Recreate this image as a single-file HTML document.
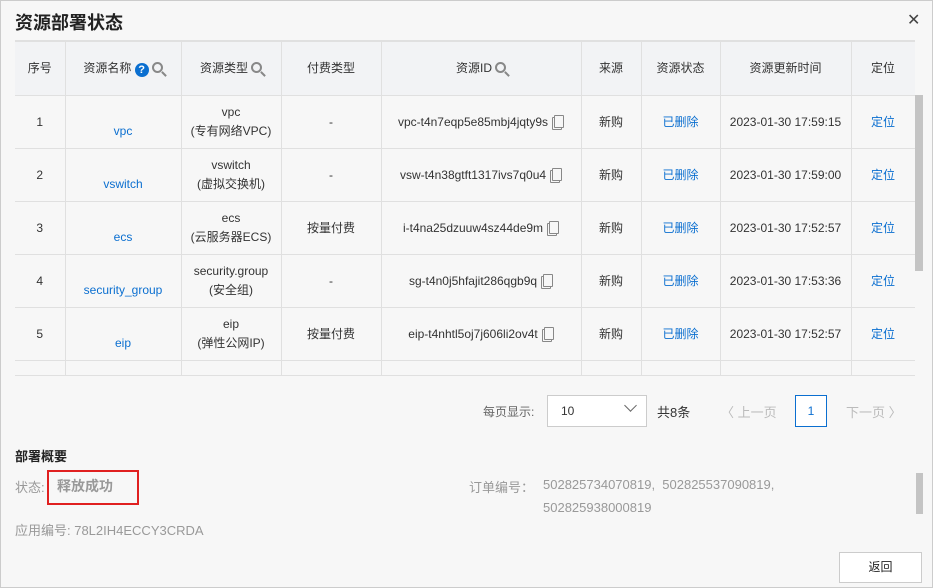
<!DOCTYPE html>
<html><head><meta charset="utf-8"><style>
*{margin:0;padding:0;box-sizing:border-box}
body{width:933px;height:588px;background:#f7f7f7;font-family:"Liberation Sans","Noto Sans CJK SC",sans-serif;font-size:12px;color:#333;position:relative;overflow:hidden;border:1px solid #ccc}
.title{position:absolute;left:14px;top:8px;font-size:18px;font-weight:bold;color:#222}
.close{position:absolute;left:906px;top:9px;font-size:16px;color:#444}
.tw{position:absolute;left:14px;top:39px;width:900px;height:336px;overflow:hidden;border-top:1px solid #e0e0e0;border-bottom:1px solid #e0e0e0}
table{border-collapse:collapse;table-layout:fixed;width:900px}
td,th{border:1px solid #e0e0e0;text-align:center;font-weight:normal;vertical-align:middle;line-height:19px}
th{height:54px;background:#f2f3f5;color:#333;font-size:12px}
td{height:53px;color:#333}
tr td:first-child,tr th:first-child{border-left:none}
a{color:#0b6fd0;text-decoration:none}
.q{display:inline-block;width:14px;height:14px;border-radius:50%;background:#0b6fd0;color:#fff;font-size:11px;line-height:14px;font-weight:bold;vertical-align:-1px}
.s{display:inline-block;width:11px;height:11px;border:2px solid #888;border-radius:50%;position:relative;vertical-align:-1px;margin-left:3px}
.s:after{content:"";position:absolute;width:2px;height:6px;background:#888;left:9px;top:7px;transform:rotate(-45deg)}
.cp{display:inline-block;width:10px;height:13px;border:1px solid #888;border-radius:1px;vertical-align:-2px;margin-left:6px;box-shadow:-2px 2px 0 -1px #f7f7f7,-2px 2px 0 0 #888}
.sb{position:absolute;left:914px;top:94px;width:8px;height:176px;background:#c4c4c4}
.pg{position:absolute;top:395px;color:#999}
.sel{position:absolute;left:546px;top:394px;width:100px;height:32px;border:1px solid #ccc;background:#fff}
</style></head><body>
<div class="title">资源部署状态</div>
<div class="close">✕</div>
<div class="tw"><table>
<colgroup><col style="width:50px"><col style="width:116px"><col style="width:100px"><col style="width:100px"><col style="width:200px"><col style="width:60px"><col style="width:79px"><col style="width:131px"><col style="width:64px"></colgroup>
<tr><th>序号</th><th>资源名称 <span class="q">?</span><span class="s"></span></th><th>资源类型<span class="s"></span></th><th>付费类型</th><th>资源ID<span class="s"></span></th><th>来源</th><th>资源状态</th><th>资源更新时间</th><th>定位</th></tr>
<tr><td>1</td><td><br><a>vpc</a></td><td>vpc<br>(专有网络VPC)</td><td>-</td><td>vpc-t4n7eqp5e85mbj4jqty9s<span class="cp"></span></td><td>新购</td><td><a>已删除</a></td><td>2023-01-30 17:59:15</td><td><a>定位</a></td></tr>
<tr><td>2</td><td><br><a>vswitch</a></td><td>vswitch<br>(虚拟交换机)</td><td>-</td><td>vsw-t4n38gtft1317ivs7q0u4<span class="cp"></span></td><td>新购</td><td><a>已删除</a></td><td>2023-01-30 17:59:00</td><td><a>定位</a></td></tr>
<tr><td>3</td><td><br><a>ecs</a></td><td>ecs<br>(云服务器ECS)</td><td>按量付费</td><td>i-t4na25dzuuw4sz44de9m<span class="cp"></span></td><td>新购</td><td><a>已删除</a></td><td>2023-01-30 17:52:57</td><td><a>定位</a></td></tr>
<tr><td>4</td><td><br><a>security_group</a></td><td>security.group<br>(安全组)</td><td>-</td><td>sg-t4n0j5hfajit286qgb9q<span class="cp"></span></td><td>新购</td><td><a>已删除</a></td><td>2023-01-30 17:53:36</td><td><a>定位</a></td></tr>
<tr><td>5</td><td><br><a>eip</a></td><td>eip<br>(弹性公网IP)</td><td>按量付费</td><td>eip-t4nhtl5oj7j606li2ov4t<span class="cp"></span></td><td>新购</td><td><a>已删除</a></td><td>2023-01-30 17:52:57</td><td><a>定位</a></td></tr>
<tr><td></td><td></td><td></td><td></td><td></td><td></td><td></td><td></td><td></td></tr>
</table></div>
<div class="sb"></div>
<div class="pg" style="left:482px;top:402px;color:#666">每页显示:</div>
<div class="sel"><span style="position:absolute;left:13px;top:8px;color:#333">10</span><span style="position:absolute;left:78px;top:5px;width:9px;height:9px;border-right:1.5px solid #666;border-bottom:1.5px solid #666;transform:rotate(45deg)"></span></div>
<div class="pg" style="left:656px;top:401px;color:#333;font-size:13px">共8条</div>
<div class="pg" style="left:720px;top:401px;color:#bbb;font-size:13px">〈 上一页</div>
<div style="position:absolute;left:794px;top:394px;width:32px;height:32px;border:1px solid #0b6fd0;background:#fff;text-align:center;line-height:30px;color:#0b6fd0">1</div>
<div class="pg" style="left:845px;top:401px;color:#bbb;font-size:13px">下一页 〉</div>
<div style="position:absolute;left:14px;top:445px;font-size:13px;font-weight:bold;color:#222">部署概要</div>
<div style="position:absolute;left:14px;top:476px;color:#999;font-size:13px">状态:</div>
<div style="position:absolute;left:46px;top:469px;width:92px;height:35px;border:2px solid #e02020"></div>
<div style="position:absolute;left:56px;top:475px;color:#999;font-size:14px;font-weight:bold">释放成功</div>
<div style="position:absolute;left:468px;top:476px;color:#999;font-size:13px">订单编号：</div>
<div style="position:absolute;left:542px;top:476px;color:#999;font-size:13px">502825734070819,&nbsp; 502825537090819,</div>
<div style="position:absolute;left:542px;top:499px;color:#999;font-size:13px">502825938000819</div>
<div style="position:absolute;left:915px;top:472px;width:7px;height:41px;background:#c4c4c4"></div>
<div style="position:absolute;left:14px;top:519px;color:#999;font-size:13px">应用编号: 78L2IH4ECCY3CRDA</div>
<div style="position:absolute;left:838px;top:551px;width:83px;height:31px;border:1px solid #ccc;background:#fff;text-align:center;line-height:29px;color:#222">返回</div>
</body></html>
